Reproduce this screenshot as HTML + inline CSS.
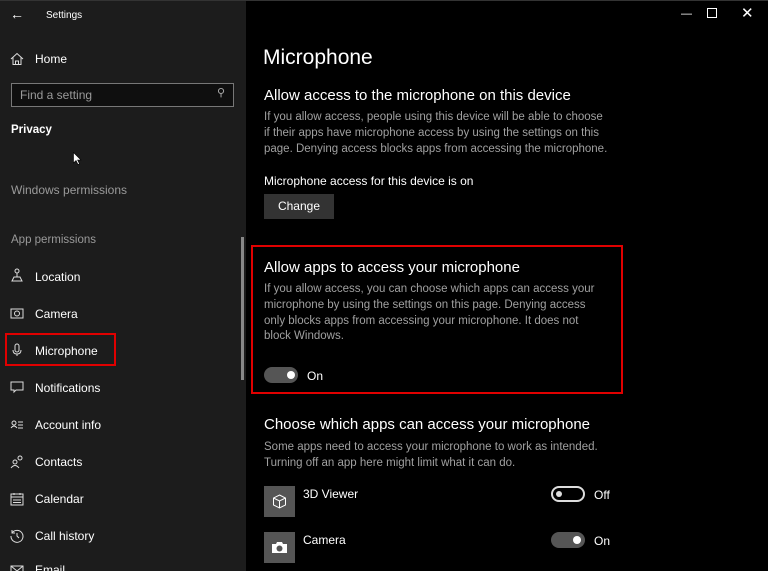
<!DOCTYPE html>
<html style="overflow:hidden;width:768px;height:571px"><head><style>
*{margin:0;padding:0;box-sizing:border-box}
body{width:768px;height:571px;background:#000;font-family:"Liberation Sans",sans-serif;position:relative;overflow:hidden;color:#fff}
.side{position:absolute;left:0;top:0;width:246px;height:571px;background:#1c1c1c;overflow:hidden}
.a{position:absolute;white-space:nowrap}
.s{font-size:12px;color:#fff}
.g{color:#9a9a9a}
.ic{position:absolute;left:10px;width:14px;height:14px}
.p{font-size:11.5px;color:#a0a0a0;line-height:15.8px}
.tg{position:absolute;width:34px;height:16px;border-radius:8px}
.btn{position:absolute;left:264px;top:194px;width:70px;height:25px;background:#333;font-size:12px;text-align:center;line-height:25px}
</style></head><body>
<div class="side">
<div class="a" style="left:10px;top:6px;font-size:14px">&#8592;</div>
<div class="a" style="left:46px;top:10px;font-size:10px">Settings</div>
<svg class="ic" style="top:52px" viewBox="0 0 14 14" fill="none" stroke="#ddd"><path d="M1 7L7 1.5 13 7M3 5.5V12.5H11V5.5M5.5 12.5V9H8.5V12.5"/></svg>
<div class="a s" style="left:35px;top:52px">Home</div>
<div class="a" style="left:11px;top:83px;width:223px;height:24px;border:1px solid #777;background:#0f0f0f"></div>
<div class="a g" style="left:20px;top:88px;font-size:12px">Find a setting</div>
<div class="a" style="left:217px;top:86px;font-size:11px;color:#aaa">&#9906;</div>
<div class="a" style="left:11px;top:124px;font-size:11.5px;font-weight:bold">Privacy</div>
<svg class="a" style="left:73px;top:152px" width="9" height="13" viewBox="0 0 9 13"><path d="M0.5 0.5V11L3 8.5L5 12.5L6.5 11.8L4.6 8H8Z" fill="#fff" stroke="#000" stroke-width="0.6"/></svg>
<div class="a g" style="left:11px;top:183px;font-size:12px">Windows permissions</div>
<div class="a g" style="left:11px;top:234px;font-size:11.5px">App permissions</div>
<div class="a s" style="left:35px;top:270px">Location</div>
<div class="a s" style="left:35px;top:307px">Camera</div>
<div class="a s" style="left:35px;top:344px">Microphone</div>
<div class="a s" style="left:35px;top:381px">Notifications</div>
<div class="a s" style="left:35px;top:418px">Account info</div>
<div class="a s" style="left:35px;top:455px">Contacts</div>
<div class="a s" style="left:35px;top:492px">Calendar</div>
<div class="a s" style="left:35px;top:529px">Call history</div>
<div class="a s" style="left:35px;top:563px">Email</div>
<svg class="ic" style="top:268px" viewBox="0 0 14 14" fill="none" stroke="#ddd"><circle cx="7" cy="3" r="2"/><path d="M7 5V9M2 13L4 9H10L12 13Z"/></svg>
<svg class="ic" style="top:306px" viewBox="0 0 14 14" fill="none" stroke="#ddd"><rect x="1" y="3" width="12" height="9"/><circle cx="7" cy="7.5" r="2.5"/></svg>
<svg class="ic" style="top:343px" viewBox="0 0 14 14" fill="none" stroke="#ddd"><rect x="5" y="1" width="4" height="8" rx="2"/><path d="M3 7Q3 11 7 11Q11 11 11 7M7 11V13"/></svg>
<svg class="ic" style="top:380px" viewBox="0 0 14 14" fill="none" stroke="#ddd"><path d="M1 2H13V10H6L4 12V10H1Z"/></svg>
<svg class="ic" style="top:418px" viewBox="0 0 14 14" fill="none" stroke="#ddd"><circle cx="4" cy="5" r="2"/><path d="M1 10Q4 6 7 10M8 4H13M8 7H13M8 10H13"/></svg>
<svg class="ic" style="top:455px" viewBox="0 0 14 14" fill="none" stroke="#ddd"><circle cx="5" cy="7" r="2"/><circle cx="10" cy="3" r="2"/><path d="M1 13Q5 8 9 13"/></svg>
<svg class="ic" style="top:492px" viewBox="0 0 14 14" fill="none" stroke="#ddd"><rect x="1" y="2" width="12" height="11"/><path d="M1 5H13M4 1V3M10 1V3M3 8H11M3 10.5H11"/></svg>
<svg class="ic" style="top:529px" viewBox="0 0 14 14" fill="none" stroke="#ddd"><path d="M2 4A6 6 0 1 1 1 7M2 1V4H5M7 4V7L9 9"/></svg>
<svg class="ic" style="top:564px" viewBox="0 0 14 14" fill="none" stroke="#ddd"><rect x="1" y="2" width="12" height="10"/><path d="M1 2L7 7L13 2"/></svg>
<div class="a" style="left:5px;top:333px;width:111px;height:33px;border:2px solid #e00000"></div>
<div class="a" style="left:241px;top:237px;width:3px;height:143px;background:#888"></div>
</div>
<div class="a" style="left:0;top:0;width:768px;height:1px;background:#333"></div>
<div class="a" style="left:681px;top:8px;font-size:11px">&#8212;</div>
<div class="a" style="left:707px;top:8px;width:10px;height:10px;border:1px solid #fff"></div>
<div class="a" style="left:741px;top:4px;font-size:15px">&#10005;</div>
<div class="a" style="left:263px;top:46px;font-size:21px">Microphone</div>
<div class="a" style="left:264px;top:87px;font-size:15px">Allow access to the microphone on this device</div>
<div class="a p" style="left:264px;top:110px">If you allow access, people using this device will be able to choose<br>if their apps have microphone access by using the settings on this<br>page. Denying access blocks apps from accessing the microphone.</div>
<div class="a s" style="left:264px;top:174px">Microphone access for this device is on</div>
<div class="btn">Change</div>
<div class="a" style="left:251px;top:245px;width:372px;height:149px;border:2px solid #e00000"></div>
<div class="a" style="left:264px;top:259px;font-size:15px">Allow apps to access your microphone</div>
<div class="a p" style="left:264px;top:282px">If you allow access, you can choose which apps can access your<br>microphone by using the settings on this page. Denying access<br>only blocks apps from accessing your microphone. It does not<br>block Windows.</div>
<div class="tg" style="left:264px;top:367px;background:#555"></div><div class="a" style="left:287px;top:371px;width:8px;height:8px;border-radius:4px;background:#fff"></div>
<div class="a s" style="left:307px;top:369px">On</div>
<div class="a" style="left:264px;top:416px;font-size:15px">Choose which apps can access your microphone</div>
<div class="a p" style="left:264px;top:440px">Some apps need to access your microphone to work as intended.<br>Turning off an app here might limit what it can do.</div>
<div class="a" style="left:264px;top:486px;width:31px;height:31px;background:#555"></div>
<svg class="a" style="left:272px;top:494px" width="15" height="15" viewBox="0 0 15 15" fill="none" stroke="#fff"><path d="M7.5 1L13.5 4V11L7.5 14L1.5 11V4ZM1.5 4L7.5 7L13.5 4M7.5 7V14"/></svg>
<div class="a s" style="left:303px;top:487px">3D Viewer</div>
<div class="tg" style="left:551px;top:486px;border:2px solid #ddd"></div><div class="a" style="left:556px;top:491px;width:6px;height:6px;border-radius:3px;background:#ddd"></div>
<div class="a s" style="left:594px;top:488px">Off</div>
<div class="a" style="left:264px;top:532px;width:31px;height:31px;background:#555"></div>
<svg class="a" style="left:271px;top:540px" width="17" height="15" viewBox="0 0 17 15"><path d="M1 4H5L6 2H11L12 4H16V13H1Z" fill="#fff"/><circle cx="8.5" cy="8.5" r="3" fill="#555"/></svg>
<div class="a s" style="left:303px;top:533px">Camera</div>
<div class="tg" style="left:551px;top:532px;background:#555"></div><div class="a" style="left:573px;top:536px;width:8px;height:8px;border-radius:4px;background:#fff"></div>
<div class="a s" style="left:594px;top:534px">On</div>
</body></html>
